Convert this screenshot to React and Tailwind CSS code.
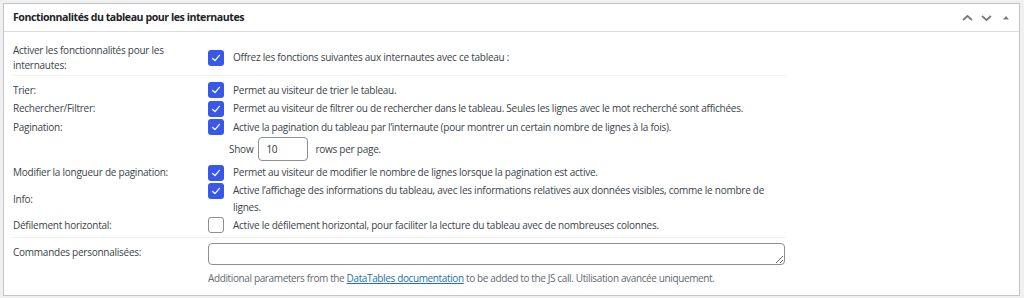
import React from "react";

const Box = ({ checked = true }) =>
  checked ? (
    <span className="w-[16px] h-[16px] shrink-0 rounded-[3px] bg-[#3858e9] flex items-center justify-center">
      <svg width="12" height="12" viewBox="0 0 12 12" fill="none">
        <path d="M2.6 6.4 L5 8.6 L9.4 3.4" stroke="#fff" strokeWidth="1.3" strokeLinecap="round" strokeLinejoin="round" />
      </svg>
    </span>
  ) : (
    <span className="w-[16px] h-[16px] shrink-0 rounded-[3px] border border-[#8c8f94] bg-white" />
  );

const Row = ({ label, children, checked = true }) => (
  <div className="grid grid-cols-[196px_1fr] min-h-[18.5px] items-center">
    <div className="pl-[1px]">{label}</div>
    <div className="flex items-center gap-[9px]">
      <Box checked={checked} />
      <span className="leading-[17px]">{children}</span>
    </div>
  </div>
);

export default function App() {
  return (
    <div
      className="w-[1024px] h-[298px] bg-[#f0f0f1] pt-[3px] pl-[3px] text-[#3c434a] text-[10px] tracking-[-0.25px]"
      style={{ fontFamily: '"Open Sans", "Noto Sans", sans-serif' }}
    >
      <div className="w-[1017px] h-[293px] border border-[#c3c4c7] bg-white flex flex-col">
        <div className="h-[28px] shrink-0 border-b border-[#dcdcde] flex items-center pl-[9px] pr-[8px]">
          <h2 className="font-bold text-[10.6px] tracking-[-0.45px] text-[#1d2327] flex-1">
            Fonctionnalités du tableau pour les internautes
          </h2>
          <div className="flex items-center gap-[6px]">
            <svg width="13" height="10" viewBox="0 0 13 10" fill="none">
              <path d="M2 7 L6.5 3 L11 7" stroke="#787c82" strokeWidth="1.8" />
            </svg>
            <svg width="13" height="10" viewBox="0 0 13 10" fill="none">
              <path d="M2 3 L6.5 7 L11 3" stroke="#787c82" strokeWidth="1.8" />
            </svg>
            <svg width="10" height="10" viewBox="0 0 10 10" fill="none" className="ml-[2px]">
              <path d="M2 6.5 L5 3 L8 6.5 Z" fill="#787c82" />
            </svg>
          </div>
        </div>

        <div className="pl-[8px] w-[781px]">
          {/* row 1 */}
          <div className="grid grid-cols-[196px_1fr] pt-[11px] pb-[3px] items-center border-b border-[#f0f0f1]">
            <div className="pl-[1px] leading-[14.5px]">
              Activer les fonctionnalités pour les
              <br />
              internautes:
            </div>
            <div className="flex items-center gap-[9px]">
              <Box />
              <span>Offrez les fonctions suivantes aux internautes avec ce tableau :</span>
            </div>
          </div>

          {/* section 2 */}
          <div className="pt-[5px] pb-[2.5px] border-b border-[#f0f0f1]">
            <Row label="Trier:">Permet au visiteur de trier le tableau.</Row>
            <Row label="Rechercher/Filtrer:">
              Permet au visiteur de filtrer ou de rechercher dans le tableau. Seules les lignes avec le mot recherché sont affichées.
            </Row>
            <Row label="Pagination:">
              Active la pagination du tableau par l’internaute (pour montrer un certain nombre de lignes à la fois).
            </Row>
            <div className="grid grid-cols-[196px_1fr] h-[27px]">
              <div />
              <div className="flex items-start pl-[21px] pt-[0.5px]">
                <span className="leading-[24px]">Show</span>
                <span className="ml-[5px] w-[50px] h-[24px] border border-[#8c8f94] rounded-[4px] flex items-center pl-[7px] text-[#2c3338]">
                  10
                </span>
                <span className="ml-[7px] leading-[24px]">rows per page.</span>
              </div>
            </div>
            <Row label="Modifier la longueur de pagination:">
              Permet au visiteur de modifier le nombre de lignes lorsque la pagination est active.
            </Row>
            <div className="grid grid-cols-[196px_1fr] items-center">
              <div className="pl-[1px]">Info:</div>
              <div className="flex items-start gap-[9px]">
                <span className="mt-[0.5px]">
                  <Box />
                </span>
                <span className="leading-[17px] flex-1">
                  Active l’affichage des informations du tableau, avec les informations relatives aux données visibles, comme le nombre de lignes.
                </span>
              </div>
            </div>
            <Row label="Défilement horizontal:" checked={false}>
              Active le défilement horizontal, pour faciliter la lecture du tableau avec de nombreuses colonnes.
            </Row>
          </div>

          {/* section 3 */}
          <div className="grid grid-cols-[196px_1fr] pt-[5px]">
            <div className="pl-[1px] leading-[18px]">Commandes personnalisées:</div>
            <div>
              <textarea
                className="block w-[577px] h-[22px] border border-[#8c8f94] rounded-[4px] bg-white resize-y outline-none"
                defaultValue=""
              />
              <p className="mt-[5px] leading-[17px] text-[#646970] tracking-[-0.37px]">
                Additional parameters from the{" "}
                <a href="#" className="text-[#2271b1] underline">
                  DataTables documentation
                </a>{" "}
                to be added to the JS call. Utilisation avancée uniquement.
              </p>
            </div>
          </div>
        </div>
      </div>
    </div>
  );
}
